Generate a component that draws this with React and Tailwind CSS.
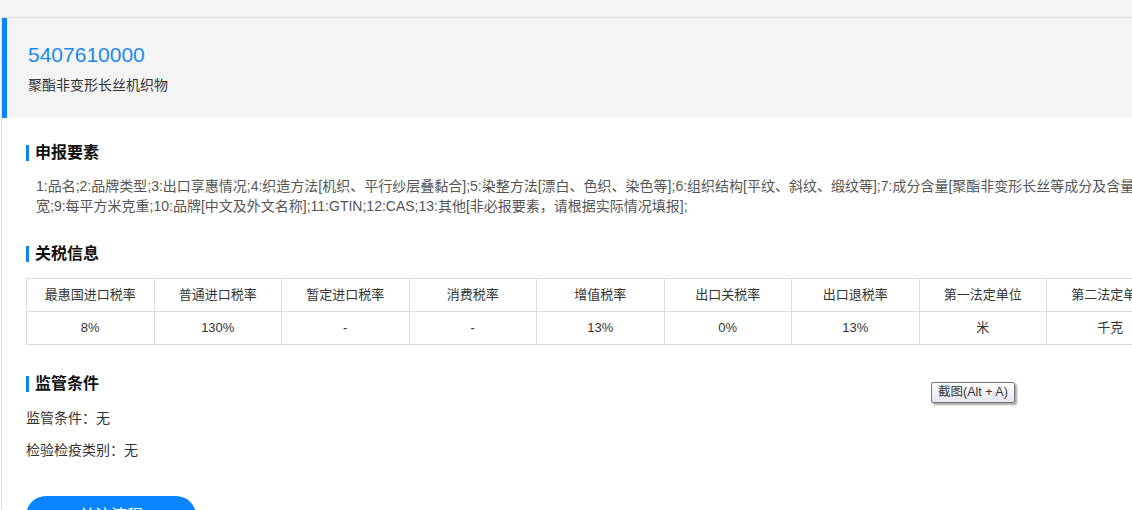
import React from "react";

const headers = ["最惠国进口税率", "普通进口税率", "暂定进口税率", "消费税率", "增值税率", "出口关税率", "出口退税率", "第一法定单位", "第二法定单位"];
const values = ["8%", "130%", "-", "-", "13%", "0%", "13%", "米", "千克"];

function SectionTitle({ children }) {
  return (
    <div className="flex items-center h-[24px]">
      <span className="w-[3px] h-[16px] bg-[#0a84ff]" />
      <span className="ml-[6px] text-[16px] font-bold text-[#111]">{children}</span>
    </div>
  );
}

export default function App() {
  return (
    <div
      className="relative w-[1132px] h-[510px] overflow-hidden bg-white"
      style={{ fontFamily: '"Liberation Sans", "Noto Sans CJK SC", sans-serif' }}
    >
      <div className="h-[17px] bg-[#f4f4f4]" />
      <div className="ml-[1px] w-[1400px] border-t border-l border-[#dcdcdc] bg-white h-[600px]">
        <div className="h-[100px] bg-[#f4f4f4] border-l-[5px] border-[#0a84ff] pl-[21px] pt-[23px]">
          <div className="text-[21px] leading-[28px] text-[#1b8af0]">5407610000</div>
          <div className="mt-[6px] text-[14px] leading-[20px] text-[#333]">聚酯非变形长丝机织物</div>
        </div>

        <div className="pl-[24px]">
          <div className="mt-[23px]">
            <SectionTitle>申报要素</SectionTitle>
          </div>
          <div className="mt-[11px] pl-[10px] text-[14px] leading-[20px] text-[#555] whitespace-nowrap">
            <div>1:品名;2:品牌类型;3:出口享惠情况;4:织造方法[机织、平行纱层叠黏合];5:染整方法[漂白、色织、染色等];6:组织结构[平纹、斜纹、缎纹等];7:成分含量[聚酯非变形长丝等成分及含量];8:幅</div>
            <div>宽;9:每平方米克重;10:品牌[中文及外文名称];11:GTIN;12:CAS;13:其他[非必报要素，请根据实际情况填报];</div>
          </div>

          <div className="mt-[26px]">
            <SectionTitle>关税信息</SectionTitle>
          </div>
          <table className="mt-[12px] w-[1276px] table-fixed border-collapse text-[13px] text-[#333]">
            <tbody>
              <tr>
                {headers.map((h) => (
                  <td key={h} className="h-[33px] border border-[#dcdcdc] text-center align-middle whitespace-nowrap">{h}</td>
                ))}
                <td className="h-[33px] border border-[#dcdcdc]" />
              </tr>
              <tr>
                {values.map((v, i) => (
                  <td key={i} className="h-[33px] border border-[#dcdcdc] text-center align-middle">{v}</td>
                ))}
                <td className="h-[33px] border border-[#dcdcdc]" />
              </tr>
            </tbody>
          </table>

          <div className="mt-[27px]">
            <SectionTitle>监管条件</SectionTitle>
          </div>
          <div className="mt-[12px] text-[14px] leading-[20px] text-[#333]">监管条件：无</div>
          <div className="mt-[12px] text-[14px] leading-[20px] text-[#333]">检验检疫类别：无</div>

          <button className="mt-[36px] w-[170px] h-[40px] rounded-full bg-[#0a84ff] text-white text-[16px] flex items-center justify-center">
            关注流程
          </button>
        </div>
      </div>

      <div className="absolute left-[931px] top-[382px] h-[21px] px-[6px] flex items-center border border-[#767676] rounded-[2px] bg-gradient-to-b from-white to-[#e4e5f0] text-[12.5px] text-[#333] shadow-[2px_2px_2px_rgba(0,0,0,0.35)]">
        截图(Alt + A)
      </div>
    </div>
  );
}
